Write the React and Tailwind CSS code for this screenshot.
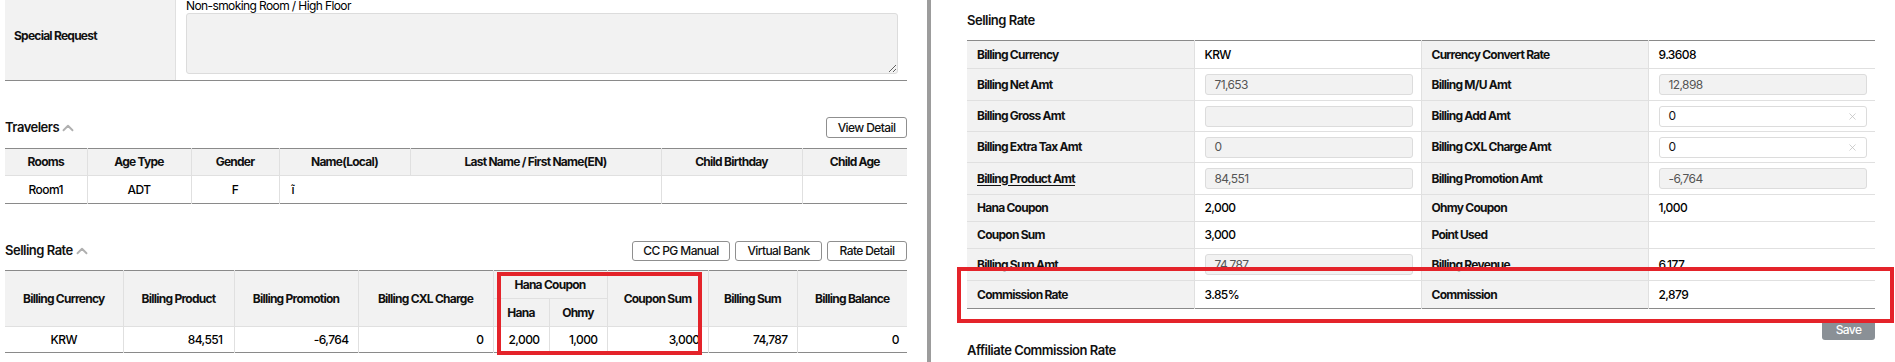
import React from "react";
import { ChevronUp, X } from "lucide-react";

const th = "border-b border-l border-[#e0e0e0] bg-[#f2f2f2] font-bold tracking-[-0.75px] text-center";
const td = "border-l border-[#e0e0e0] font-medium text-black";

const SectionTitle = ({ children, chevron }) => (
  <div className="flex items-center text-[13px] font-semibold tracking-[-0.5px] text-[#111]">
    {children}
    {chevron && <ChevronUp size={18} strokeWidth={2.5} className="text-[#b0b0b0]" />}
  </div>
);

const Btn = ({ children, w }) => (
  <button className={`${w} h-[20px] rounded-[3px] border border-[#8f8f8f] bg-white text-[12px] font-medium text-[#111]`}>
    {children}
  </button>
);

const Field = ({ value, clear }) => (
  <div
    className={`flex h-[21px] w-[208px] items-center justify-between rounded-[3px] border border-[#dcdcdc] pl-[9px] pr-[8px] font-normal ${
      clear ? "bg-white text-[#111]" : "bg-[#f2f2f2] text-[#555]"
    }`}
  >
    <span>{value}</span>
    {clear && <X size={11} strokeWidth={1.6} className="text-[#bdbdbd]" />}
  </div>
);

const rightRows = [
  { h: "h-[28px]", l1: "Billing Currency", v1: "KRW", l2: "Currency Convert Rate", v2: "9.3608" },
  { h: "h-[32px]", l1: "Billing Net Amt", v1: <Field value="71,653" />, l2: "Billing M/U Amt", v2: <Field value="12,898" /> },
  { h: "h-[31px]", l1: "Billing Gross Amt", v1: <Field value="" />, l2: "Billing Add Amt", v2: <Field value="0" clear /> },
  { h: "h-[31px]", l1: "Billing Extra Tax Amt", v1: <Field value="0" />, l2: "Billing CXL Charge Amt", v2: <Field value="0" clear /> },
  { h: "h-[32px]", l1: <span className="underline underline-offset-2">Billing Product Amt</span>, v1: <Field value="84,551" />, l2: "Billing Promotion Amt", v2: <Field value="-6,764" /> },
  { h: "h-[27px]", l1: "Hana Coupon", v1: "2,000", l2: "Ohmy Coupon", v2: "1,000" },
  { h: "h-[27px]", l1: "Coupon Sum", v1: "3,000", l2: "Point Used", v2: "" },
  { h: "h-[32px]", l1: "Billing Sum Amt", v1: <Field value="74,787" />, l2: "Billing Revenue", v2: "6,177" },
  { h: "h-[28px]", l1: "Commission Rate", v1: "3.85%", l2: "Commission", v2: "2,879" },
];

export default function App() {
  return (
    <div className="flex h-[362px] w-[1895px] overflow-hidden bg-white font-['Inter','Liberation_Sans',sans-serif] text-[12px] tracking-[-0.6px] text-[#111]">
      {/* LEFT PANEL */}
      <div className="relative w-[927px] shrink-0 pl-[5px] pr-[20px]">
        {/* SPECIAL REQUEST */}
        <div className="-mt-[8px] flex border-b border-[#8a8a8a]">
          <div className="flex w-[171px] items-center border-r border-[#e0e0e0] bg-[#f2f2f2] pl-[9px] font-bold tracking-[-0.75px]">
            Special Request
          </div>
          <div className="flex-1 pb-[6px] pl-[10px] pr-[9px] pt-[7px]">
            <div className="leading-[13px] text-black">Non-smoking Room / High Floor</div>
            <textarea
              readOnly
              className="mt-[1px] block h-[61px] w-[712px] rounded-[3px] border border-[#dcdcdc] bg-[#f2f2f2]"
            />
          </div>
        </div>

        {/* TRAVELERS */}
        <div className="mt-[36px] flex h-[21px] items-center justify-between">
          <SectionTitle chevron>Travelers</SectionTitle>
          <button className="h-[21px] w-[81px] rounded-[3px] border border-[#8f8f8f] bg-white text-[12px] font-medium">
            View Detail
          </button>
        </div>
        <table className="mt-[10px] w-[902px] table-fixed border-b border-t border-[#8a8a8a]">
          <colgroup>
            <col className="w-[82px]" />
            <col className="w-[104px]" />
            <col className="w-[88px]" />
            <col className="w-[131px]" />
            <col className="w-[251px]" />
            <col className="w-[141px]" />
            <col className="w-[105px]" />
          </colgroup>
          <thead>
            <tr className="h-[27px]">
              <th className={`${th} border-l-0`}>Rooms</th>
              <th className={th}>Age Type</th>
              <th className={th}>Gender</th>
              <th className={th}>Name(Local)</th>
              <th className={th}>Last Name / First Name(EN)</th>
              <th className={th}>Child Birthday</th>
              <th className={th}>Child Age</th>
            </tr>
          </thead>
          <tbody>
            <tr className="h-[28px]">
              <td className={`${td} border-l-0 text-center`}>Room1</td>
              <td className={`${td} text-center`}>ADT</td>
              <td className={`${td} text-center`}>F</td>
              <td className={`${td} pl-[12px]`}>ĩ</td>
              <td className="font-medium" />
              <td className={td} />
              <td className={td} />
            </tr>
          </tbody>
        </table>

        {/* SELLING RATE */}
        <div className="mt-[37px] flex h-[20px] items-center justify-between">
          <SectionTitle chevron>Selling Rate</SectionTitle>
          <div className="flex gap-[5px]">
            <Btn w="w-[98px]">CC PG Manual</Btn>
            <Btn w="w-[87px]">Virtual Bank</Btn>
            <Btn w="w-[80px]">Rate Detail</Btn>
          </div>
        </div>
        <table className="mt-[9px] w-[902px] table-fixed border-b border-t border-[#8a8a8a]">
          <colgroup>
            <col className="w-[118px]" />
            <col className="w-[111px]" />
            <col className="w-[124px]" />
            <col className="w-[135px]" />
            <col className="w-[56px]" />
            <col className="w-[58px]" />
            <col className="w-[101px]" />
            <col className="w-[89px]" />
            <col className="w-[110px]" />
          </colgroup>
          <thead>
            <tr className="h-[28px]">
              <th rowSpan={2} className={`${th} border-l-0`}>Billing Currency</th>
              <th rowSpan={2} className={th}>Billing Product</th>
              <th rowSpan={2} className={th}>Billing Promotion</th>
              <th rowSpan={2} className={th}>Billing CXL Charge</th>
              <th colSpan={2} className={th}>Hana Coupon</th>
              <th rowSpan={2} className={th}>Coupon Sum</th>
              <th rowSpan={2} className={th}>Billing Sum</th>
              <th rowSpan={2} className={th}>Billing Balance</th>
            </tr>
            <tr className="h-[28px]">
              <th className={th}>Hana</th>
              <th className={th}>Ohmy</th>
            </tr>
          </thead>
          <tbody>
            <tr className="h-[26px]">
              <td className={`${td} border-l-0 text-center`}>KRW</td>
              <td className={`${td} pr-[11px] text-right`}>84,551</td>
              <td className={`${td} pr-[9px] text-right`}>-6,764</td>
              <td className={`${td} pr-[9px] text-right`}>0</td>
              <td className={`${td} pr-[9px] text-right`}>2,000</td>
              <td className={`${td} pr-[9px] text-right`}>1,000</td>
              <td className={`${td} pr-[8px] text-right`}>3,000</td>
              <td className={`${td} pr-[9px] text-right`}>74,787</td>
              <td className={`${td} pr-[8px] text-right`}>0</td>
            </tr>
          </tbody>
        </table>

        {/* highlight */}
        <div className="pointer-events-none absolute left-[497px] top-[272px] h-[83px] w-[205px] border-[4px] border-[#e4232a]" />
      </div>

      {/* DIVIDER */}
      <div className="w-[4px] shrink-0 bg-[#9c9c9c]" />

      {/* RIGHT PANEL */}
      <div className="relative flex flex-1 flex-col pl-[36px] pr-[20px] pt-[10px]">
        <div className="h-[20px] leading-[20px]">
          <SectionTitle>Selling Rate</SectionTitle>
        </div>
        <table className="mt-[10px] w-[908px] table-fixed border-b border-t border-[#8a8a8a]">
          <colgroup>
            <col className="w-[227px]" />
            <col className="w-[227px]" />
            <col className="w-[227px]" />
            <col className="w-[227px]" />
          </colgroup>
          <tbody>
            {rightRows.map((r, i) => {
              const last = i === rightRows.length - 1;
              const b = last ? "" : "border-b";
              return (
                <tr key={i} className={r.h}>
                  <td className={`${b} border-[#e0e0e0] bg-[#f2f2f2] pl-[10px] font-bold tracking-[-0.75px]`}>{r.l1}</td>
                  <td className={`${b} border-l border-[#e0e0e0] pl-[10px] font-medium text-black`}>{r.v1}</td>
                  <td className={`${b} border-l border-[#e0e0e0] bg-[#f2f2f2] pl-[10px] font-bold tracking-[-0.75px]`}>{r.l2}</td>
                  <td className={`${b} border-l border-[#e0e0e0] pl-[10px] font-medium text-black`}>{r.v2}</td>
                </tr>
              );
            })}
          </tbody>
        </table>
        <div className="mt-[10px] flex w-[908px] justify-end">
          <button className="h-[21px] w-[53px] rounded-[3px] bg-[#8a9096] text-[12px] font-medium text-white">
            Save
          </button>
        </div>
        <div className="leading-[20px]">
          <SectionTitle>Affiliate Commission Rate</SectionTitle>
        </div>

        {/* highlight */}
        <div className="pointer-events-none absolute left-[26px] top-[267px] h-[56px] w-[937px] border-[4px] border-[#e4232a]" />
      </div>
    </div>
  );
}
